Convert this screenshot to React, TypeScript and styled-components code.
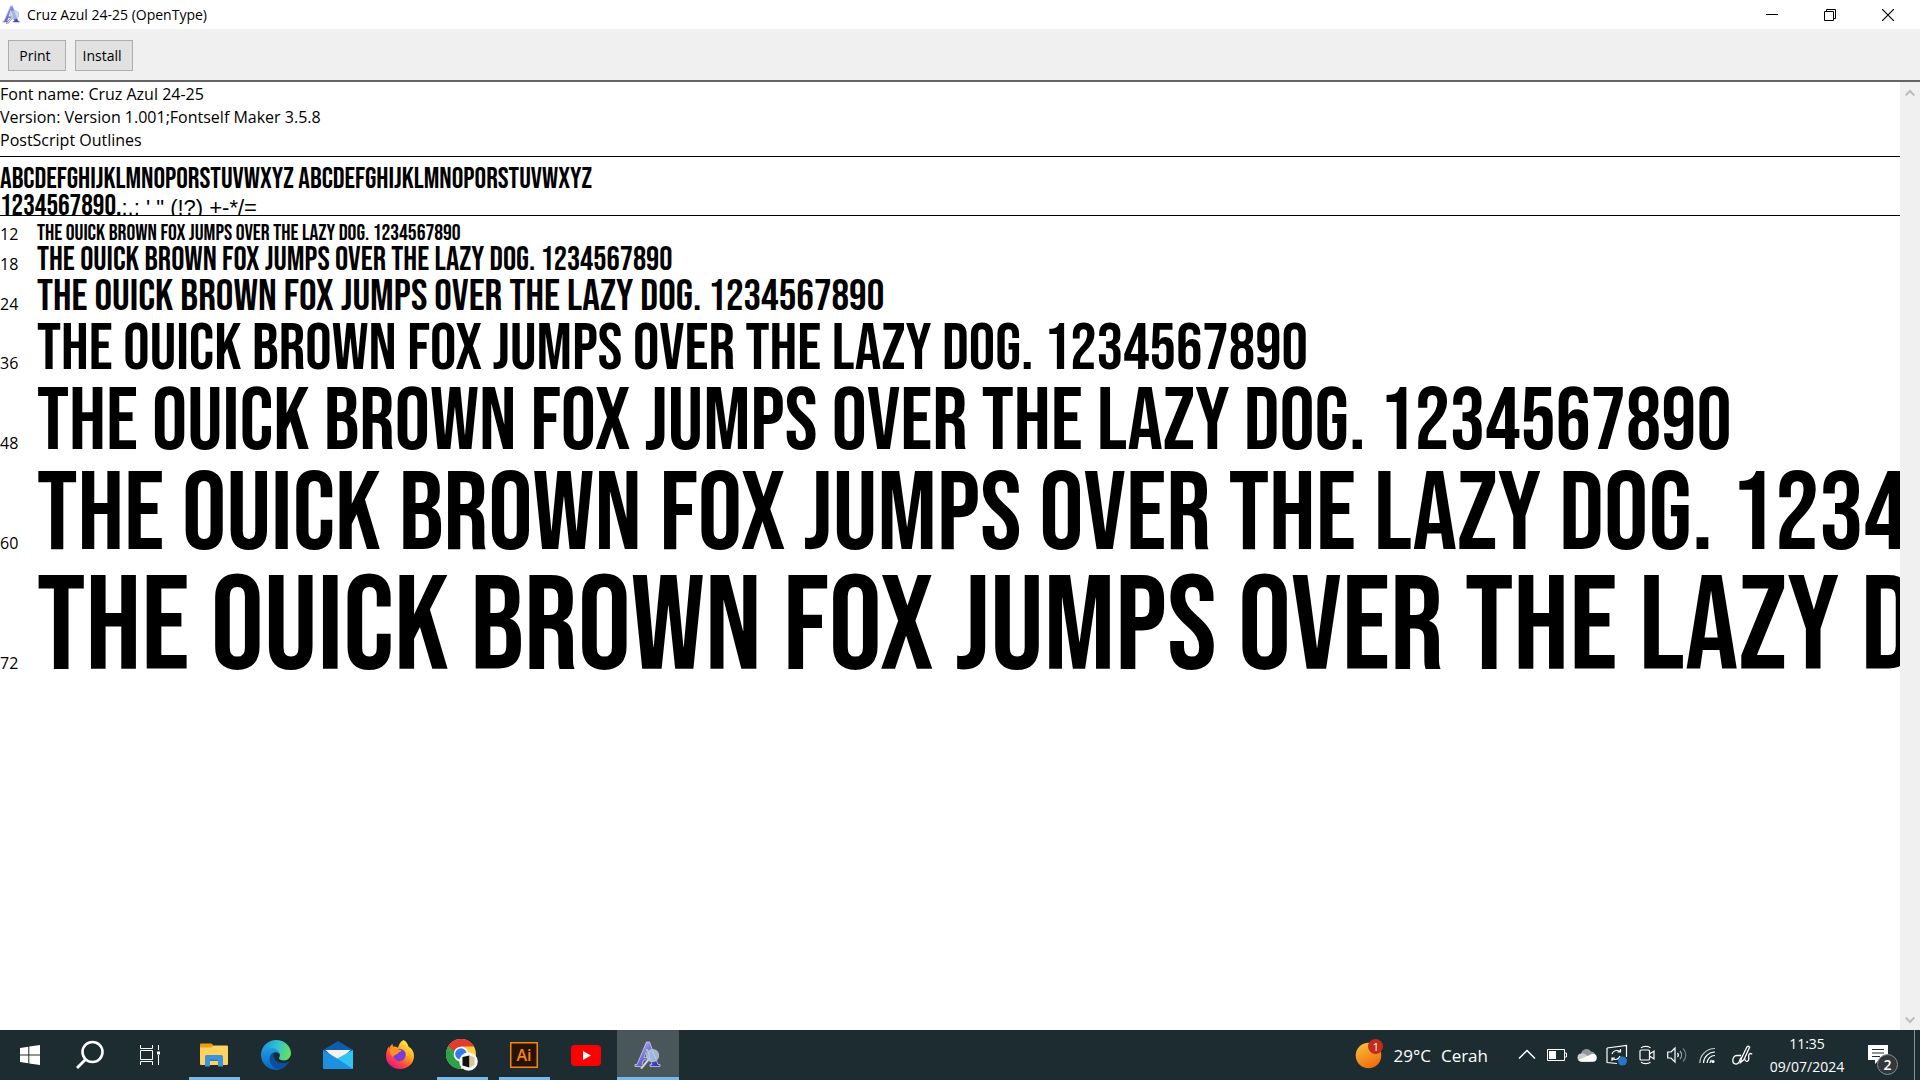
import React from 'react';
import styled, { createGlobalStyle } from 'styled-components';

const ui = '"Open Sans", "Noto Sans", sans-serif';
const display = '"Bebas Neue", "Open Sans Condensed", "Roboto Condensed", sans-serif';

const GlobalStyle = createGlobalStyle`
  *, *::before, *::after { box-sizing: border-box; }
  body { margin: 0; background: #fff; color: #000; font-family: ${ui}; }
  button { font: inherit; color: inherit; border: 0; background: none; padding: 0; margin: 0; }
  p, h1 { margin: 0; font-weight: inherit; }
  svg { display: block; flex: none; }
`;

const Desktop = styled.div`
  display: flex;
  flex-direction: column;
  height: 100vh;
  overflow: hidden;
`;

/* ---------- window chrome ---------- */

const TitleBar = styled.header`
  display: flex;
  align-items: center;
  gap: 6px;
  height: 29px;
  flex: none;
  padding: 0 3px 0 2px;
`;

const Title = styled.h1`
  flex: 1;
  font-size: 14px;
  line-height: 29px;
`;

const WindowButton = styled.button`
  display: flex;
  align-items: center;
  justify-content: center;
  width: 58px;
  height: 29px;
`;

const WindowButtons = styled.div`
  display: flex;
`;

const Toolbar = styled.div`
  display: flex;
  gap: 9px;
  height: 53px;
  flex: none;
  padding: 11px 8px 0;
  background: #f0f0f0;
  border-bottom: 2px solid #646464;
`;

const ToolButton = styled.button`
  width: 58px;
  height: 31px;
  padding-right: 4px;
  background: #e1e1e1;
  border: 1px solid #adadad;
  font-size: 14px;
`;

/* ---------- preview ---------- */

const Body = styled.div`
  display: flex;
  flex: 1;
  min-height: 0;
`;

const Preview = styled.main`
  flex: 1;
  min-width: 0;
  overflow: hidden;
`;

const Info = styled.section`
  padding: 1px 0 4px;
  border-bottom: 1px solid #000;
  font-size: 16px;
  line-height: 23px;
`;

const Glyphs = styled.section`
  height: 59px;
  padding-top: 9px;
  overflow: hidden;
  border-bottom: 1px solid #000;
  font: 400 29px/27px ${display};
  white-space: nowrap;
`;

const Fallback = styled.span`
  font: 400 22px/20px "Liberation Sans", Arial, sans-serif;
`;

const Samples = styled.section`
  padding-top: 4px;
`;

const SampleRow = styled.div<{ $pitch: number; $line: number }>`
  display: flex;
  align-items: baseline;
  height: ${p => p.$pitch}px;
  padding-top: ${p => p.$pitch - p.$line}px;
  white-space: nowrap;
`;

const PointSize = styled.span`
  flex: none;
  width: 37px;
  font-size: 16px;
  line-height: 12px;
`;

const Sample = styled.p<{ $size: number; $line: number }>`
  font: 400 ${p => p.$size}px/${p => p.$line}px ${display};
`;

const ScrollTrack = styled.div`
  display: flex;
  flex-direction: column;
  justify-content: space-between;
  width: 20px;
  flex: none;
  background: #f0f0f0;
`;

const ScrollButton = styled.button`
  display: flex;
  align-items: center;
  justify-content: center;
  width: 20px;
  height: 21px;
`;

/* ---------- taskbar ---------- */

const Taskbar = styled.footer`
  display: flex;
  height: 50px;
  flex: none;
  background: #1c2c31;
  color: #fff;
`;

const SystemButtons = styled.div`
  display: flex;
  padding-right: 3px;
`;

const SystemButton = styled.button`
  display: flex;
  align-items: center;
  justify-content: center;
  width: 60px;
`;

const AppButton = styled.button<{ $state?: 'open' | 'active' }>`
  display: flex;
  flex-direction: column;
  align-items: center;
  justify-content: center;
  width: 62px;
  padding-top: 3px;
  background: ${p => (p.$state === 'active' ? '#49575b' : 'transparent')};

  &::after {
    content: '';
    width: ${p => (p.$state === 'active' ? 62 : 51)}px;
    height: 3px;
    margin-top: auto;
    background: ${p => (p.$state ? '#76b9ed' : 'transparent')};
  }
  & > svg { margin-top: auto; }
`;

const Spacer = styled.div`
  flex: 1;
`;

const Weather = styled.button`
  display: flex;
  align-items: center;
  gap: 10px;
  padding-right: 24px;
  font-size: 17px;
`;

const WeatherIcon = styled.span`
  position: relative;
  width: 28px;
  height: 28px;
`;

const WeatherBadge = styled.span`
  position: absolute;
  top: -2px;
  right: 0;
  width: 15px;
  height: 15px;
  border-radius: 50%;
  background: #c42b1c;
  font-size: 11px;
  line-height: 15px;
  text-align: center;
`;

const TrayButton = styled.button<{ $width?: number }>`
  display: flex;
  align-items: center;
  justify-content: center;
  width: ${p => p.$width ?? 30}px;
`;

const Clock = styled.button`
  display: flex;
  flex-direction: column;
  align-items: center;
  width: 90px;
  padding-top: 2px;
  font-size: 14px;
  line-height: 23px;
`;

const NoticeIcon = styled.span`
  position: relative;
  width: 30px;
  height: 20px;
`;

const NoticeBadge = styled.span`
  position: absolute;
  right: 0;
  bottom: -10px;
  width: 21px;
  height: 21px;
  border: 1px solid #8a8f92;
  border-radius: 50%;
  background: #33373a;
  font-size: 14px;
  font-weight: 600;
  line-height: 19px;
  text-align: center;
`;

const ShowDesktop = styled.button`
  width: 6px;
  border-left: 1px solid #8b9396;
`;

/* ---------- drawings ---------- */

const FontViewerIcon = ({ size, id }: { size: number; id: string }) => (
  <svg width={size} height={size} viewBox="0 0 28 28" aria-hidden="true">
    <defs>
      <linearGradient id={id} x1="0" y1="0" x2="1" y2="1">
        <stop offset="0" stopColor="#c9cdf0" />
        <stop offset=".5" stopColor="#6a68d8" />
        <stop offset="1" stopColor="#2b27b8" />
      </linearGradient>
    </defs>
    <path d="M12.500 1h3L24 23.500h2V25.500H16V23.500h2l-1.400-4.500H9.500L8 23.500h2V25.500H1V23.500h2zM13 8l-3 8.500h5.800z" fill={`url(#${id})`} stroke="#dfe2f5" strokeWidth=".7" />
    <path d="M15.500 17.500L7.500 27" stroke="#6e7478" strokeWidth="3" strokeLinecap="round" />
    <path d="M15.500 17.500L7.500 27" stroke="#e2e2dc" strokeWidth="1.600" strokeLinecap="round" />
    <circle cx="18.500" cy="14.500" r="6" fill="#b9d3ee" fillOpacity=".75" stroke="#aebfce" strokeWidth="1.200" />
  </svg>
);

const WindowsLogo = () => (
  <svg width="20" height="20" viewBox="0 0 20 20" fill="#fff">
    <path d="M0 3l8.300-1.300v7.800H0zM9.300 1.500L20 0v9.500H9.300zM0 10.500h8.300v7.800L0 17zM9.300 10.500H20V20L9.300 18.500z" />
  </svg>
);

const SearchIcon = () => (
  <svg width="30" height="30" viewBox="0 0 30 30" fill="none" stroke="#fff">
    <circle cx="17.500" cy="12" r="10" strokeWidth="2.600" />
    <path d="M10.500 19.500L2 28" strokeWidth="2.800" />
  </svg>
);

const TaskViewIcon = () => (
  <svg width="22" height="20" viewBox="0 0 22 20" fill="none" stroke="#fff">
    <path d="M1.500 0v3.500h12V0M1.500 20v-3.500h12V20M1.500 5.500h12v9h-12zM19.500 0v5M19.500 10v10" />
    <path d="M18 6.500h3v3h-3z" fill="#fff" stroke="none" />
  </svg>
);

const ExplorerIcon = () => (
  <svg width="28" height="24" viewBox="0 0 28 24">
    <path d="M0 1.500Q0 .5 1 .5h10.500l2 2-2 3H0z" fill="#e5a00c" />
    <path d="M0 4.500h11l2.500-2H27q1 0 1 1V21q0 1-1 1H1q-1 0-1-1z" fill="#fdd25f" />
    <path d="M5 23.500V13.500q0-1.500 1.500-1.500h15q1.500 0 1.500 1.500v10h-5V17.500h-8v6z" fill="#3c94d8" />
    <path d="M10 16.500h8v1.500h-8z" fill="#2b7cbc" />
  </svg>
);

const EdgeIcon = () => (
  <svg width="30" height="30" viewBox="0 0 30 30">
    <defs>
      <linearGradient id="edgeTop" x1="0" y1=".4" x2="1" y2=".6">
        <stop offset="0" stopColor="#1c90dc" />
        <stop offset=".5" stopColor="#33c3d0" />
        <stop offset="1" stopColor="#6be154" />
      </linearGradient>
      <linearGradient id="edgeBody" x1="0" y1="0" x2="0" y2="1">
        <stop offset="0" stopColor="#209fe6" />
        <stop offset="1" stopColor="#0a62bb" />
      </linearGradient>
    </defs>
    <path d="M.2 13C1.200 5.500 7.500 0 15 0c8.600 0 15 6.300 15 13 0 4.500-3.300 7.400-7 7.400-3 0-5.100-1-5.100-2.100 0-.7 1-1.200 1-3.300 0-2.600-3-4.800-7-4.800-5 0-9.800 1.600-11.700 2.800z" fill="url(#edgeTop)" />
    <path d="M.1 13.200C1.300 9 5 7.500 9 7.500c6 0 9.900 4 9.900 7.500 0 0-2-3.300-5.400-2.500-4 1-5.500 5-4 9.300 1.500 4.500 5.500 7 9.500 7.700-1.500.4-2.700.5-4 .5C6 30-.8 22.500.1 13.200z" fill="url(#edgeBody)" />
    <path d="M12.500 13c-3.500 1.500-4.700 5.300-3.300 9.300 1.500 4.200 5.500 6.900 9.800 7.200 3.700-1 6.800-3.500 8.700-6.900.3-.6-.2-1-.7-.7-6.500 3-14.500.1-14.500-6.900 0-.7 0-1.300 0-2z" fill="#0c4fa0" />
  </svg>
);

const MailIcon = () => (
  <svg width="30" height="28" viewBox="0 0 30 28">
    <path d="M0 9L15 0l15 9v4H0z" fill="#0f5cab" />
    <path d="M2.500 9h25L15 21z" fill="#f3f3f3" />
    <path d="M30 9v18q0 1-1 1H4l11-11z" fill="#35c3f3" />
    <path d="M0 9l15 9 15 10H1q-1 0-1-1z" fill="#1f8fe0" />
  </svg>
);

const FirefoxIcon = () => (
  <svg width="30" height="30" viewBox="0 0 30 30">
    <defs>
      <linearGradient id="fox" x1=".85" y1=".1" x2=".25" y2=".95">
        <stop offset="0" stopColor="#fff044" />
        <stop offset=".4" stopColor="#ffa31e" />
        <stop offset=".7" stopColor="#ff4b3a" />
        <stop offset="1" stopColor="#e5178a" />
      </linearGradient>
    </defs>
    <path d="M18.500 0c3 1.500 4.500 4 5 6.500C27 8.500 29 12 29 16c0 7.500-6.200 13-14 13S1 23.500 1 16c0-4 1-6.500 2.500-9.500L4 8.500C4.800 6.500 6 5 7.500 4L8 6.500c2 0 3.700.5 5 1.300C14 4 15.500 1.500 18.500 0z" fill="url(#fox)" />
    <circle cx="14.500" cy="15" r="6.200" fill="#7a3bd8" />
    <path d="M5 9.500c3-2 6-1.500 8.500 0l3 .5c-.5 2-3 2-3.500 3-.7 2-4 1.500-5 4C5.500 15 4.500 12 5 9.500z" fill="#ff9322" />
    <path d="M18 9c3 1 4.500 4 3.500 7.500 1.500-1 2-3 1.500-5-1-2-3-3-5-2.500z" fill="#ffc230" />
  </svg>
);

const ChromeIcon = () => (
  <svg width="32" height="32" viewBox="0 0 32 32">
    <circle cx="15" cy="15" r="15" fill="#ffcd41" />
    <path d="M2 7.500L8.500 18.750A7.500 7.500 0 0 0 15 22.500L15 30A15 15 0 0 1 2 7.500z" fill="#2ba24c" />
    <path d="M2 7.500l6.500 11.250L13 13 15 7.500z" fill="#2ba24c" />
    <path d="M2 7.500A15 15 0 0 1 28 7.500H15L9 12.500z" fill="#e33b2e" />
    <circle cx="15" cy="15" r="7.300" fill="#fff" />
    <circle cx="15" cy="15" r="5.800" fill="#2f7de9" />
    <circle cx="22.500" cy="22.500" r="9.300" fill="#f6f6f4" />
    <path d="M16.500 18l7-1.500v12l-7-2z" fill="#111" />
    <path d="M23.500 16.500l5 2v7.500l-5 2.500z" fill="#d9c4a0" />
  </svg>
);

const IllustratorIcon = () => (
  <svg width="28" height="26" viewBox="0 0 28 26">
    <path d="M.75.75h26.500v24.500H.75z" fill="#271303" stroke="#f68312" strokeWidth="1.500" />
    <text x="14" y="18.500" textAnchor="middle" fontFamily={ui} fontWeight="600" fontSize="16" fill="#f68312">Ai</text>
  </svg>
);

const YoutubeIcon = () => (
  <svg width="30" height="21" viewBox="0 0 30 21">
    <rect width="30" height="21" rx="4" fill="#f00" />
    <path d="M12 6l8 4.500-8 4.500z" fill="#fff" />
  </svg>
);

const SunIcon = () => (
  <svg width="28" height="28" viewBox="0 0 28 28">
    <defs>
      <linearGradient id="sun" x1=".2" y1="0" x2=".7" y2="1">
        <stop offset="0" stopColor="#f7bf3a" />
        <stop offset="1" stopColor="#ef6a0c" />
      </linearGradient>
    </defs>
    <circle cx="13.500" cy="14.500" r="12.800" fill="url(#sun)" />
  </svg>
);

const line = { fill: 'none', stroke: '#fff', strokeWidth: 1.2 } as const;

const ChevronIcon = () => (
  <svg width="18" height="12" viewBox="0 0 18 12" {...line} strokeWidth={1.5}><path d="M1 9.500l8-8 8 8" /></svg>
);
const BatteryIcon = () => (
  <svg width="20" height="12" viewBox="0 0 20 12" {...line} strokeWidth={1}>
    <path d="M.5.5h17v11H.5zM18 4h1.500v4H18" /><path d="M2 2h7v8H2z" fill="#fff" stroke="none" />
  </svg>
);
const CloudIcon = () => (
  <svg width="20" height="14" viewBox="0 0 20 14">
    <path d="M4 6A5.500 5.500 0 0 1 14 3.500 4 4 0 0 1 18 6l-7 4z" fill="#8e979a" />
    <path d="M4.500 5.500A5 5 0 0 1 8 6l8 6.500-3 1H4.500a4 4 0 0 1 0-8z" fill="#c9cdcf" />
    <path d="M1.500 12l9-4 5-2.200a4 4 0 0 1 .5 8H4.500a4 4 0 0 1-3-1.800z" fill="#fff" />
  </svg>
);
const UpdateIcon = () => (
  <svg width="22" height="22" viewBox="0 0 22 22" {...line}>
    <path d="M1 4L20.500 1.500V13M1 4v14.500l10 1" />
    <path d="M6 10a5 4.500 0 0 1 8-2.500M14.500 5v3h-3M14 12a5 4.500 0 0 1-8 2.500M6 17v-3h3" />
    <circle cx="16.500" cy="17" r="4.500" fill="#2b74c4" stroke="none" />
  </svg>
);
const CameraIcon = () => (
  <svg width="16" height="20" viewBox="0 0 16 20" {...line}>
    <rect x="1" y="5" width="9.500" height="10" rx="1" />
    <path d="M10.500 9L15 6v8l-4.500-3M2 2.800C4 .8 9.500.8 11.500 2.800M2 17.200c2 2 7.500 2 9.500 0" />
  </svg>
);
const SpeakerIcon = () => (
  <svg width="20" height="18" viewBox="0 0 20 18" {...line}>
    <path d="M.7 6H4l4-4v14l-4-4H.7zM10.500 7a3 3 0 0 1 0 4" />
    <path d="M13 5a6 6 0 0 1 0 8" opacity=".6" /><path d="M16 2.500a9 9 0 0 1 0 13" opacity=".4" />
  </svg>
);
const WifiIcon = () => (
  <svg width="17" height="17" viewBox="0 0 17 17" {...line}>
    <path d="M.8 16A15 15 0 0 1 16 1.500" opacity=".75" /><path d="M4.500 16A11.500 11.500 0 0 1 16 5" />
    <path d="M8 16a8 8 0 0 1 8-7.500" /><path d="M11 16a4.500 4.500 0 0 1 1.500-3" />
    <circle cx="14" cy="14.500" r="1.600" fill="#fff" stroke="none" />
  </svg>
);
const PenIcon = () => (
  <svg width="21" height="21" viewBox="0 0 21 21" {...line} strokeWidth={1.3}>
    <path d="M8.500 17.500l.8-4L15 1.800q1.500-1.300 2.600.4L12 14.500z" />
    <path d="M9.200 10.500H5C2 10.500.8 13 .8 15.500c0 4 4.200 4.500 6 2 1-1.500 1-4 2.500-5M12.500 13c0 3.500 3 4.500 4 2s-.5-4 .5-5.500 2.500-1 3.200-.3" />
  </svg>
);
const NoticeBubble = () => (
  <svg width="20" height="19" viewBox="0 0 20 19">
    <path d="M0 0h20v15H11l-4 4v-4H0z" fill="#fff" />
    <path d="M4 4.500h12M4 8h12M4 11.500h8" stroke="#1c2c31" strokeWidth="1.200" />
  </svg>
);

const ScrollArrow = ({ down }: { down?: boolean }) => (
  <svg width="10" height="8" viewBox="0 0 10 8" fill="none" stroke="#bcbcbc" strokeWidth="2">
    <path d={down ? 'M.7 1.500L5 6l4.300-4.500' : 'M.7 6.500L5 2l4.300 4.500'} />
  </svg>
);

/* ---------- data ---------- */

const pangram = 'THE OUICK BROWN FOX JUMPS OVER THE LAZY DOG. 1234567890';
const alphabet = 'ABCDEFGHIJKLMNOPORSTUVWXYZ';

const samples = [
  { pt: 12, size: 22, line: 13, pitch: 20 },
  { pt: 18, size: 33, line: 20, pitch: 30 },
  { pt: 24, size: 44, line: 26, pitch: 40 },
  { pt: 36, size: 66, line: 39, pitch: 59 },
  { pt: 48, size: 88, line: 53, pitch: 80 },
  { pt: 60, size: 111, line: 66, pitch: 100 },
  { pt: 72, size: 133, line: 79, pitch: 120 },
];

const apps: { name: string; icon: React.ReactNode; state?: 'open' | 'active' }[] = [
  { name: 'File Explorer', icon: <ExplorerIcon />, state: 'open' },
  { name: 'Microsoft Edge', icon: <EdgeIcon /> },
  { name: 'Mail', icon: <MailIcon /> },
  { name: 'Firefox', icon: <FirefoxIcon /> },
  { name: 'Google Chrome', icon: <ChromeIcon />, state: 'open' },
  { name: 'Adobe Illustrator', icon: <IllustratorIcon />, state: 'open' },
  { name: 'YouTube', icon: <YoutubeIcon /> },
  { name: 'Font Viewer', icon: <FontViewerIcon size={28} id="viewerTask" />, state: 'active' },
];

const tray = [
  { name: 'Show hidden icons', icon: <ChevronIcon /> },
  { name: 'Battery', icon: <BatteryIcon /> },
  { name: 'OneDrive', icon: <CloudIcon /> },
  { name: 'Windows Update', icon: <UpdateIcon /> },
  { name: 'Meet Now', icon: <CameraIcon /> },
  { name: 'Volume', icon: <SpeakerIcon /> },
  { name: 'Network', icon: <WifiIcon /> },
  { name: 'Windows Ink Workspace', icon: <PenIcon />, width: 40 },
];

export default function App() {
  return (
    <Desktop>
      <GlobalStyle />
      <TitleBar>
        <FontViewerIcon size={19} id="viewerTitle" />
        <Title>Cruz Azul 24-25 (OpenType)</Title>
        <WindowButtons>
          <WindowButton aria-label="Minimize">
            <svg width="12" height="12" stroke="#000"><path d="M0 5.500h12" /></svg>
          </WindowButton>
          <WindowButton aria-label="Restore">
            <svg width="12" height="12" stroke="#000" fill="none"><path d="M.5 2.500h9v9h-9zM2.500 2.500v-2h9v9h-2" /></svg>
          </WindowButton>
          <WindowButton aria-label="Close">
            <svg width="12" height="12" stroke="#000" strokeWidth="1.200"><path d="M0 0l12 12M12 0L0 12" /></svg>
          </WindowButton>
        </WindowButtons>
      </TitleBar>
      <Toolbar>
        <ToolButton>Print</ToolButton>
        <ToolButton>Install</ToolButton>
      </Toolbar>
      <Body>
        <Preview>
          <Info>
            <p>Font name: Cruz Azul 24-25</p>
            <p>Version: Version 1.001;Fontself Maker 3.5.8</p>
            <p>PostScript Outlines</p>
          </Info>
          <Glyphs>
            <p>{alphabet} {alphabet}</p>
            <p>1234567890.<Fallback>:,; ' " (!?) +-*/=</Fallback></p>
          </Glyphs>
          <Samples>
            {samples.map(s => (
              <SampleRow key={s.pt} $pitch={s.pitch} $line={s.line}>
                <PointSize>{s.pt}</PointSize>
                <Sample $size={s.size} $line={s.line}>{pangram}</Sample>
              </SampleRow>
            ))}
          </Samples>
        </Preview>
        <ScrollTrack>
          <ScrollButton aria-label="Scroll up"><ScrollArrow /></ScrollButton>
          <ScrollButton aria-label="Scroll down"><ScrollArrow down /></ScrollButton>
        </ScrollTrack>
      </Body>
      <Taskbar>
        <SystemButtons>
          <SystemButton aria-label="Start"><WindowsLogo /></SystemButton>
          <SystemButton aria-label="Search"><SearchIcon /></SystemButton>
          <SystemButton aria-label="Task View"><TaskViewIcon /></SystemButton>
        </SystemButtons>
        {apps.map(a => (
          <AppButton key={a.name} aria-label={a.name} $state={a.state}>{a.icon}</AppButton>
        ))}
        <Spacer />
        <Weather>
          <WeatherIcon><SunIcon /><WeatherBadge>1</WeatherBadge></WeatherIcon>
          <span>29°C</span>
          <span>Cerah</span>
        </Weather>
        {tray.map(t => (
          <TrayButton key={t.name} aria-label={t.name} $width={t.width}>{t.icon}</TrayButton>
        ))}
        <Clock><span>11:35</span><span>09/07/2024</span></Clock>
        <TrayButton aria-label="Notifications" $width={62}>
          <NoticeIcon>
            <NoticeBubble />
            <NoticeBadge>2</NoticeBadge>
          </NoticeIcon>
        </TrayButton>
        <ShowDesktop aria-label="Show desktop" />
      </Taskbar>
    </Desktop>
  );
}
